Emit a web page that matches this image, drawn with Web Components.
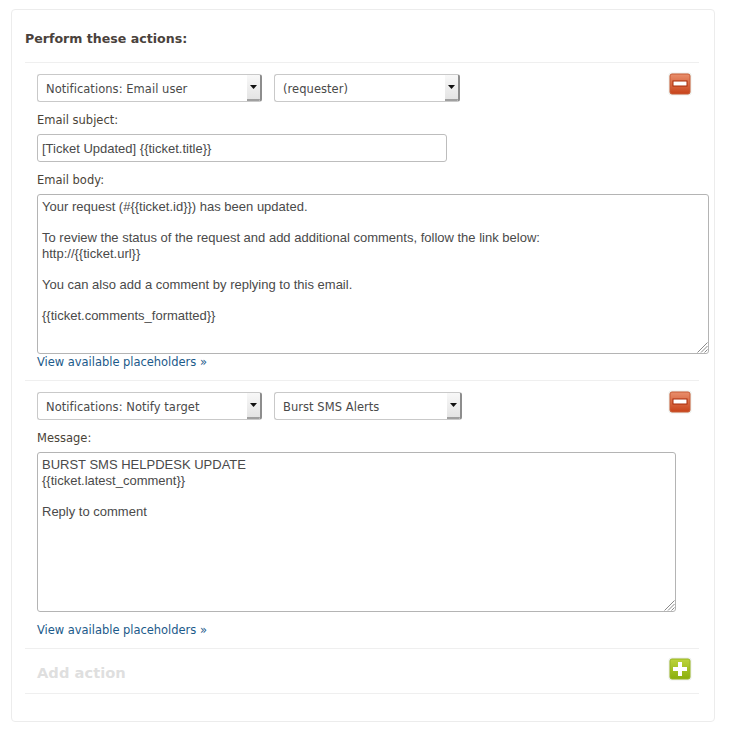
<!DOCTYPE html>
<html>
<head>
<meta charset="utf-8">
<title>Perform these actions</title>
<style>
  html, body { margin: 0; background: #fff; }
  body { font-family: "DejaVu Sans", sans-serif; font-size: 11.5px; color: #4a4a4a; }
</style>
</head>
<body>
<actions-panel heading="Perform these actions:">
  <action-row>
    <round-btn slot="btn" kind="remove"></round-btn>
    <div class="selects" slot="selects">
      <drop-select w="225">Notifications: Email user</drop-select>
      <drop-select w="186">(requester)</drop-select>
    </div>
    <field-label>Email subject:</field-label>
    <text-input w="410">[Ticket Updated] {{ticket.title}}</text-input>
    <field-label>Email body:</field-label>
    <text-box w="672">Your request (#{{ticket.id}}) has been updated.

To review the status of the request and add additional comments, follow the link below:
http://{{ticket.url}}

You can also add a comment by replying to this email.

{{ticket.comments_formatted}}</text-box>
    <placeholder-link>View available placeholders »</placeholder-link>
  </action-row>
  <action-row>
    <round-btn slot="btn" kind="remove"></round-btn>
    <div class="selects" slot="selects">
      <drop-select w="225">Notifications: Notify target</drop-select>
      <drop-select w="188">Burst SMS Alerts</drop-select>
    </div>
    <field-label>Message:</field-label>
    <text-box w="639">BURST SMS HELPDESK UPDATE
{{ticket.latest_comment}}

Reply to comment</text-box>
    <placeholder-link spaced>View available placeholders »</placeholder-link>
  </action-row>
  <add-row></add-row>
</actions-panel>

<script>
class actionsPanel extends HTMLElement {
  connectedCallback() {
    this.attachShadow({mode: 'open'});
    this.shadowRoot.innerHTML = `
      <style>
        :host {
          display: block;
          box-sizing: border-box;
          width: 704px;
          height: 713px;
          margin: 9px 0 0 11px;
          padding: 0 15px 0 13px;
          border: 1px solid #ececec;
          border-radius: 4px;
        }
        h3 {
          margin: 0;
          height: 53px;
          box-sizing: border-box;
          padding-top: 20px;
          line-height: 18px;
          font-size: 12.6px;
          font-weight: bold;
          color: #4a423c;
          border-bottom: 1px solid #efefef;
        }
      </style>
      <h3>${this.getAttribute('heading')}</h3>
      <slot></slot>
    `;
  }
}

class actionRow extends HTMLElement {
  connectedCallback() {
    this.attachShadow({mode: 'open'});
    this.shadowRoot.innerHTML = `
      <style>
        :host {
          display: block;
          position: relative;
          box-sizing: border-box;
          padding: 11px 0 10px 12px;
          border-bottom: 1px solid #efefef;
        }
        .btn { position: absolute; top: 9px; right: 7px; }
        ::slotted(.selects) { display: flex; gap: 12px; }
      </style>
      <div class="btn"><slot name="btn"></slot></div>
      <slot name="selects"></slot>
      <slot></slot>
    `;
  }
}

class dropSelect extends HTMLElement {
  connectedCallback() {
    this.attachShadow({mode: 'open'});
    this.shadowRoot.innerHTML = `
      <style>
        :host {
          display: flex;
          box-sizing: border-box;
          width: ${this.getAttribute('w')}px;
          height: 28px;
          border: 1px solid #c9c9c9;
          border-right: 2px solid #8d8d8d;
          border-radius: 3px;
          background: #fff;
          overflow: hidden;
        }
        .txt {
          flex: 1;
          padding-left: 8px;
          line-height: 28px;
          font-size: 11.5px;
          letter-spacing: 0.05px;
          color: #4a4a4a;
          white-space: nowrap;
        }
        .arrow {
          width: 13px;
          display: flex;
          align-items: center;
          justify-content: center;
          background: linear-gradient(#f8f8f8, #e4e4e4);
          border-bottom: 2px solid #a0a0a0;
          box-sizing: border-box;
        }
      </style>
      <div class="txt"><slot></slot></div>
      <div class="arrow">
        <svg width="7" height="4" viewBox="0 0 7 4"><path d="M0 0h7L3.5 4z" fill="#111"/></svg>
      </div>
    `;
  }
}

class fieldLabel extends HTMLElement {
  connectedCallback() {
    this.attachShadow({mode: 'open'});
    this.shadowRoot.innerHTML = `
      <style>
        :host {
          display: block;
          height: 32px;
          box-sizing: border-box;
          padding-top: 10px;
          line-height: 16px;
          font-size: 11.5px;
          color: #4a4338;
        }
      </style>
      <slot></slot>
    `;
  }
}

class textInput extends HTMLElement {
  connectedCallback() {
    this.attachShadow({mode: 'open'});
    this.shadowRoot.innerHTML = `
      <style>
        :host {
          display: block;
          box-sizing: border-box;
          width: ${this.getAttribute('w')}px;
          height: 28px;
          padding-left: 4px;
          border: 1px solid #bdbdbd;
          border-radius: 3px;
          line-height: 28px;
          font-family: "Liberation Sans", sans-serif;
          font-size: 13px;
          color: #4a4a4a;
        }
      </style>
      <slot></slot>
    `;
  }
}

class textBox extends HTMLElement {
  connectedCallback() {
    this.attachShadow({mode: 'open'});
    this.shadowRoot.innerHTML = `
      <style>
        :host {
          display: block;
          position: relative;
          box-sizing: border-box;
          width: ${this.getAttribute('w')}px;
          height: 160px;
          padding: 4px 4px 3px;
          border: 1px solid #b4b4b4;
          border-radius: 3px;
          line-height: 15.6px;
          font-family: "Liberation Sans", sans-serif;
          font-size: 13px;
          color: #4a4a4a;
        }
        .t { white-space: pre-wrap; }
        svg { position: absolute; right: 0; bottom: 0; }
      </style>
      <div class="t"><slot></slot></div>
      <svg width="11" height="11" viewBox="0 0 11 11">
        <path d="M0.5 10.5 10.5 0.5M4 10.5 10.5 4M7.5 10.5 10.5 7.5" stroke="#8a8a8a" fill="none"/>
      </svg>
    `;
  }
}

class placeholderLink extends HTMLElement {
  connectedCallback() {
    this.attachShadow({mode: 'open'});
    this.shadowRoot.innerHTML = `
      <style>
        :host {
          display: block;
          height: 16px;
          line-height: 16px;
          font-size: 11.5px;
          letter-spacing: -0.03px;
        }
        :host([spaced]) { margin-top: 10px; }
        a { color: #1c5a8a; text-decoration: none; }
      </style>
      <a href="#"><slot></slot></a>
    `;
  }
}

class roundBtn extends HTMLElement {
  connectedCallback() {
    this.attachShadow({mode: 'open'});
    const remove = this.getAttribute('kind') == 'remove';
    const top = remove ? '#e98f6c' : '#bcd43a';
    const bottom = remove ? '#c8431a' : '#8aae0c';
    const edge = remove ? '#c65a34' : '#98b522';
    const mark = remove
      ? '<rect x="3.5" y="7.5" width="15" height="6" fill="#a82a08"/><rect x="4.5" y="8.5" width="13" height="4" fill="#fff"/>'
      : '<path d="M9 4h4v5h5v4h-5v5H9v-5H4V9h5z" fill="#fff"/>';
    this.shadowRoot.innerHTML = `
      <style>
        :host { display: block; width: 24px; height: 24px; }
        svg { display: block; }
      </style>
      <svg width="24" height="24" viewBox="-1 -1 24 24">
        <defs>
          <linearGradient id="g" x1="0" y1="0" x2="0" y2="1">
            <stop offset="0" stop-color="${top}"/>
            <stop offset="1" stop-color="${bottom}"/>
          </linearGradient>
        </defs>
        <rect x="-0.5" y="-0.5" width="23" height="23" rx="3" fill="#eef0ec"/>
        <rect x="1" y="1" width="20" height="20" rx="2" fill="url(#g)" stroke="${edge}"/>
        ${mark}
      </svg>
    `;
  }
}

class addRow extends HTMLElement {
  connectedCallback() {
    this.attachShadow({mode: 'open'});
    this.shadowRoot.innerHTML = `
      <style>
        :host {
          display: flex;
          align-items: center;
          justify-content: space-between;
          box-sizing: border-box;
          height: 45px;
          padding: 0 7px 0 12px;
          border-bottom: 1px solid #efefef;
        }
        .title {
          font-size: 14.7px;
          font-weight: bold;
          color: #dfdfdf;
          padding-top: 2px;
        }
        round-btn { margin-top: -4px; }
      </style>
      <div class="title">Add action</div>
      <round-btn kind="add"></round-btn>
    `;
  }
}

customElements.define("actions-panel", actionsPanel);
customElements.define("action-row", actionRow);
customElements.define("drop-select", dropSelect);
customElements.define("field-label", fieldLabel);
customElements.define("text-input", textInput);
customElements.define("text-box", textBox);
customElements.define("placeholder-link", placeholderLink);
customElements.define("round-btn", roundBtn);
customElements.define("add-row", addRow);
</script>
</body>
</html>
